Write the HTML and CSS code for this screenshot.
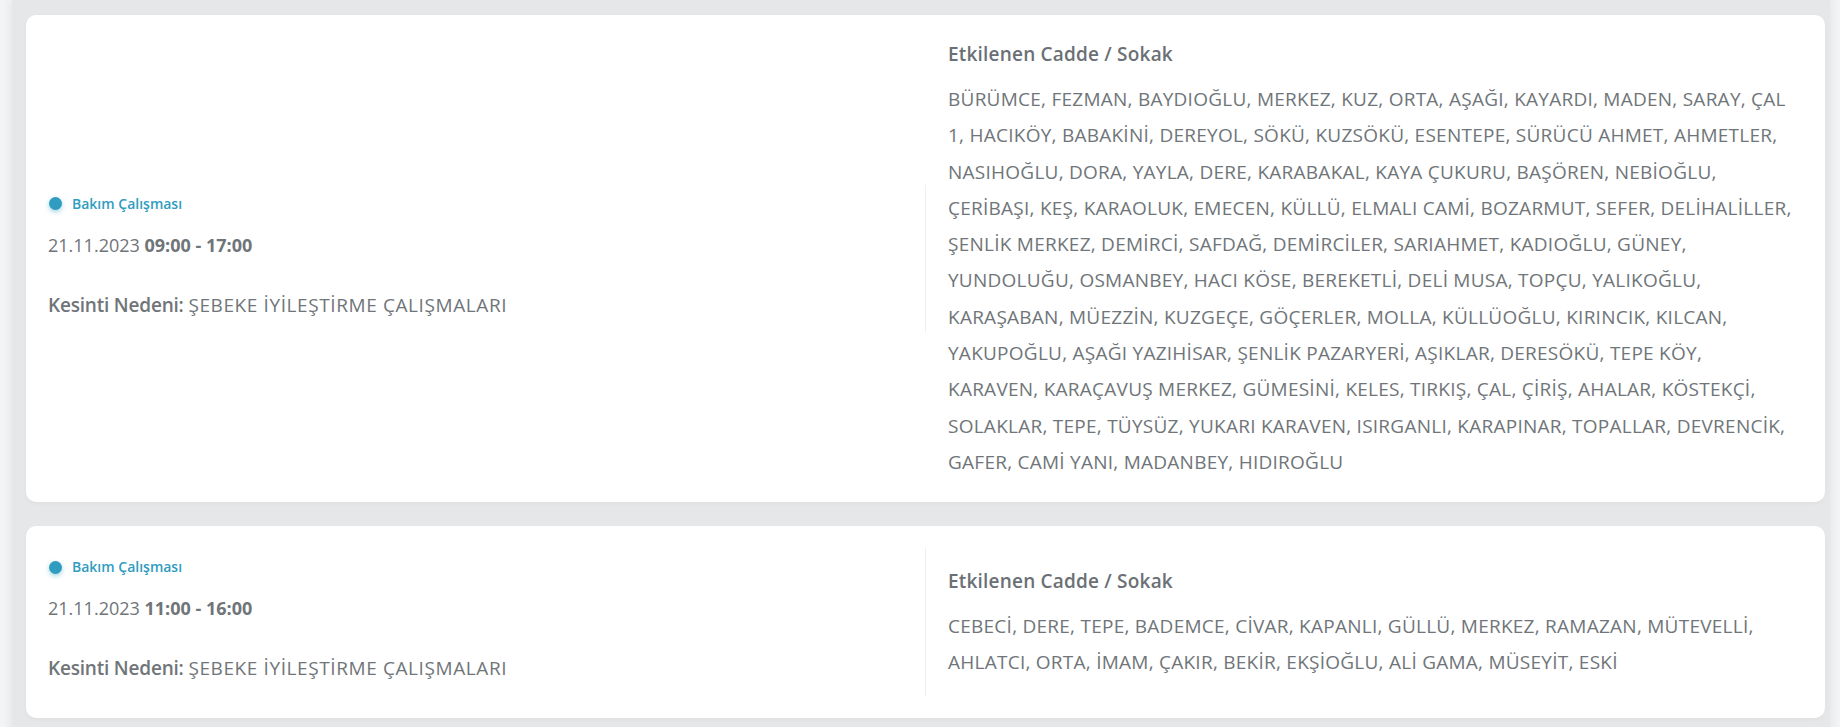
FILE: index.html
```html
<!DOCTYPE html>
<html lang="tr">
<head>
<meta charset="utf-8">
<title>Kesintiler</title>
<link rel="stylesheet" href="styles.css">
</head>
<body>
<div class="list">
  <div class="card">
    <div class="info">
      <div class="badge"><span class="dot"></span>Bakım Çalışması</div>
      <div class="date">21.11.2023 <b>09:00 - 17:00</b></div>
      <div class="reason"><b>Kesinti Nedeni:</b> <span>ŞEBEKE İYİLEŞTİRME ÇALIŞMALARI</span></div>
    </div>
    <div class="streets">
      <div class="title">Etkilenen Cadde / Sokak</div>
      <div class="names">BÜRÜMCE, FEZMAN, BAYDIOĞLU, MERKEZ, KUZ, ORTA, AŞAĞI, KAYARDI, MADEN, SARAY, ÇAL 1, HACIKÖY, BABAKİNİ, DEREYOL, SÖKÜ, KUZSÖKÜ, ESENTEPE, SÜRÜCÜ AHMET, AHMETLER, NASIHOĞLU, DORA, YAYLA, DERE, KARABAKAL, KAYA ÇUKURU, BAŞÖREN, NEBİOĞLU, ÇERİBAŞI, KEŞ, KARAOLUK, EMECEN, KÜLLÜ, ELMALI CAMİ, BOZARMUT, SEFER, DELİHALİLLER, ŞENLİK MERKEZ, DEMİRCİ, SAFDAĞ, DEMİRCİLER, SARIAHMET, KADIOĞLU, GÜNEY, YUNDOLUĞU, OSMANBEY, HACI KÖSE, BEREKETLİ, DELİ MUSA, TOPÇU, YALIKOĞLU, KARAŞABAN, MÜEZZİN, KUZGEÇE, GÖÇERLER, MOLLA, KÜLLÜOĞLU, KIRINCIK, KILCAN, YAKUPOĞLU, AŞAĞI YAZIHİSAR, ŞENLİK PAZARYERİ, AŞIKLAR, DERESÖKÜ, TEPE KÖY, KARAVEN, KARAÇAVUŞ MERKEZ, GÜMESİNİ, KELES, TIRKIŞ, ÇAL, ÇİRİŞ, AHALAR, KÖSTEKÇİ, SOLAKLAR, TEPE, TÜYSÜZ, YUKARI KARAVEN, ISIRGANLI, KARAPINAR, TOPALLAR, DEVRENCİK, GAFER, CAMİ YANI, MADANBEY, HIDIROĞLU</div>
    </div>
  </div>
  <div class="card">
    <div class="info">
      <div class="badge"><span class="dot"></span>Bakım Çalışması</div>
      <div class="date">21.11.2023 <b>11:00 - 16:00</b></div>
      <div class="reason"><b>Kesinti Nedeni:</b> <span>ŞEBEKE İYİLEŞTİRME ÇALIŞMALARI</span></div>
    </div>
    <div class="streets">
      <div class="title">Etkilenen Cadde / Sokak</div>
      <div class="names">CEBECİ, DERE, TEPE, BADEMCE, CİVAR, KAPANLI, GÜLLÜ, MERKEZ, RAMAZAN, MÜTEVELLİ, AHLATCI, ORTA, İMAM, ÇAKIR, BEKİR, EKŞİOĞLU, ALİ GAMA, MÜSEYİT, ESKİ</div>
    </div>
  </div>
</div>
</body>
</html>
```

FILE: styles.css
```css
* { box-sizing: border-box; }
html, body { height: 100%; }
body {
  margin: 0;
  background: #f4f5f7;
  font-family: "Open Sans", "Noto Sans", sans-serif;
  color: #6f7579;
  overflow: hidden;
}
.list {
  margin: 0 10px 0 12px;
  min-height: 100%;
  background: #e6e7e9;
  box-shadow: 0 0 10px 3px #e6e7e9;
  padding: 15px 5px 30px 14px;
  display: flex;
  flex-direction: column;
  gap: 24px;
}
.card {
  background: #fff;
  border-radius: 10px;
  box-shadow: 0 2px 4px rgba(0, 0, 0, 0.03);
  padding: 22px 30px 22px 22px;
  display: flex;
  align-items: center;
}
.info {
  flex: 0 0 878px;
  border-right: 1px solid #efefef;
  padding: 8px 0 15px 0;
  height: 148px;
}
.badge {
  display: flex;
  align-items: center;
  font-size: 14px;
  font-weight: 600;
  color: #2f9cc0;
  line-height: 22px;
}
.dot {
  width: 13px;
  height: 13px;
  border-radius: 50%;
  background: #2f9cc0;
  box-shadow: 0 2px 5px rgba(47, 156, 192, 0.45);
  margin: 0 10px 0 1px;
}
.date {
  margin-top: 17px;
  font-size: 18px;
  line-height: 26px;
}
.date b { font-weight: 700; }
.reason {
  margin-top: 34px;
  font-size: 19px;
  line-height: 26px;
  letter-spacing: -0.2px;
}
.reason b { font-weight: 600; }
.reason span { letter-spacing: 0.6px; }
.streets {
  flex: 1 1 0;
  min-width: 0;
  padding-left: 22px;
}
.title {
  font-size: 19px;
  font-weight: 600;
  line-height: 34px;
  color: #6a7075;
  letter-spacing: 0.2px;
  margin-bottom: 10px;
}
.names {
  font-size: 19px;
  line-height: 36.3px;
  letter-spacing: 0.25px;
}
```
